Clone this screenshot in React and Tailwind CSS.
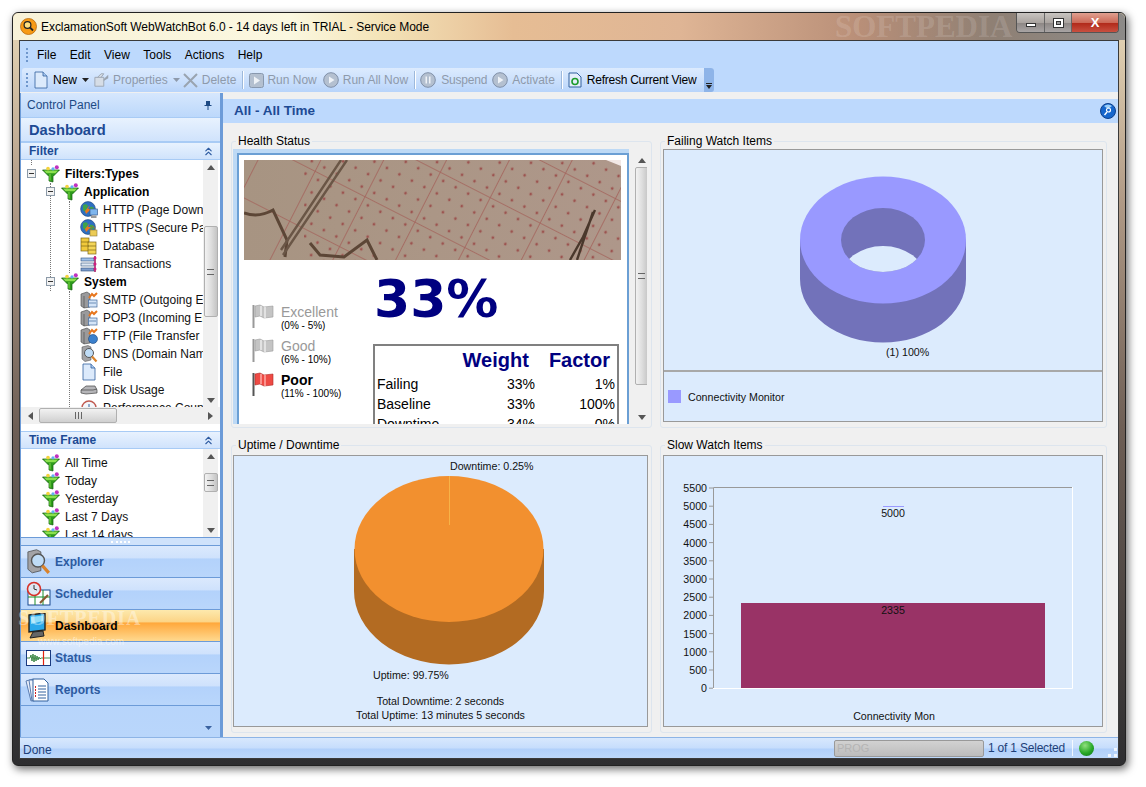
import { ChevronsUp } from "lucide-react"

const ui = "font-['Liberation_Sans',Arial,sans-serif]"

function Funnel() {
  return (
    <svg width="18" height="18" viewBox="0 0 18 18" className="shrink-0">
      <path d="M0.5 5 H17.5 L11 11.5 V17 L7 16 V11.5 Z" fill="#2d9a1a" stroke="#0f5c0c" strokeWidth="0.7" />
      <path d="M2 5.6 H16 L13.5 8.2 H4.5 Z" fill="#8be04e" />
      <path d="M8 9 V15.5" stroke="#6fd03e" strokeWidth="1.2" />
      <circle cx="6" cy="3.6" r="1.8" fill="#f4d33c" />
      <circle cx="11" cy="3.8" r="1.6" fill="#60b0f0" />
      <circle cx="14.8" cy="2.2" r="2" fill="#c030c0" />
    </svg>
  )
}

function Globe({ lock }) {
  return (
    <svg width="18" height="18" viewBox="0 0 18 18" className="shrink-0">
      <circle cx="8" cy="8" r="7.4" fill="#2d6fc2" stroke="#1b3f78" strokeWidth="0.6" />
      <path d="M3 4 Q7 2 8 5 Q6 8 8 10 Q5 12 3 9 Z M10 6 Q14 5 14 9 Q12 12 10 10 Z" fill="#3fa34a" />
      <path d="M5 10 L10 4 L8 8 L11 8 L6 13 Z" fill="#e8781e" />
      {lock ? (
        <g>
          <path d="M11 11 V9.5 A2 2 0 0 1 15 9.5 V11" fill="none" stroke="#8a7a40" strokeWidth="1" />
          <rect x="10" y="11" width="7" height="6" fill="#eccb55" stroke="#8a7a40" strokeWidth="0.6" />
        </g>
      ) : (
        <g>
          <rect x="10" y="8" width="7.5" height="6" fill="#7fb6ee" stroke="#3a5f95" strokeWidth="0.7" />
          <rect x="11" y="14.5" width="5.5" height="2.5" fill="#9a9a9a" />
        </g>
      )}
    </svg>
  )
}

function Database() {
  return (
    <svg width="18" height="18" viewBox="0 0 18 18" className="shrink-0">
      <rect x="1" y="1" width="8" height="13" fill="#f0c93c" stroke="#7c6414" strokeWidth="0.7" />
      <rect x="8" y="5" width="8" height="12" fill="#f4d658" stroke="#7c6414" strokeWidth="0.7" />
      <path d="M1 5 H9 M1 9 H9 M8 9 H16 M8 13 H16" stroke="#7c6414" strokeWidth="0.7" />
    </svg>
  )
}

function Transactions() {
  return (
    <svg width="18" height="18" viewBox="0 0 18 18" className="shrink-0">
      <rect x="1" y="3" width="13" height="3" fill="#9fc0ea" stroke="#31507e" strokeWidth="0.6" />
      <rect x="1" y="8" width="13" height="3" fill="#dfe8f3" stroke="#31507e" strokeWidth="0.6" />
      <rect x="1" y="13" width="13" height="3" fill="#7d9ccb" stroke="#31507e" strokeWidth="0.6" />
      <path d="M15 1 V17" stroke="#a01860" strokeWidth="1.5" />
      <circle cx="15" cy="3" r="1.5" fill="#d01c80" />
      <circle cx="15" cy="9" r="1.5" fill="#d01c80" />
      <circle cx="15" cy="14" r="1.5" fill="#d01c80" />
    </svg>
  )
}

function ServerMail({ ftp }) {
  return (
    <svg width="18" height="18" viewBox="0 0 18 18" className="shrink-0">
      <path d="M1 3 L7 1 L10 3 V16 L4 17 L1 15 Z" fill="#9a9a9c" stroke="#444" strokeWidth="0.6" />
      <path d="M4 5 V17" stroke="#444" strokeWidth="0.6" />
      <path d="M9 7 L12 3 L14 5 L17 2" fill="none" stroke="#e8761c" strokeWidth="2" />
      {ftp ? <circle cx="13" cy="12" r="4.5" fill="#3b80cc" stroke="#1c4478" strokeWidth="0.6" /> : <rect x="8.5" y="9" width="8.5" height="7" fill="#d5e5f8" stroke="#41679c" strokeWidth="0.7" />}
      {!ftp && <path d="M9 12 H16" stroke="#41679c" strokeWidth="0.7" />}
    </svg>
  )
}

function Magnifier({ size = 18 }) {
  return (
    <svg width={size} height={size} viewBox="0 0 18 18" className="shrink-0">
      <path d="M2 2 L8 0.5 L11 2 V15 L5 16.5 L2 14 Z" fill="#a3a3a6" stroke="#444" strokeWidth="0.5" />
      <circle cx="9" cy="8" r="4.5" fill="#bfdcf6" stroke="#555" strokeWidth="1" />
      <path d="M12 11.5 L16.5 16.5" stroke="#d9822b" strokeWidth="2.2" />
    </svg>
  )
}

function FileIcon() {
  return (
    <svg width="18" height="18" viewBox="0 0 18 18" className="shrink-0">
      <path d="M3 1 H11 L15 5 V17 H3 Z" fill="#dceafb" stroke="#31609e" strokeWidth="0.8" />
      <path d="M11 1 V5 H15" fill="#a8c8ee" stroke="#31609e" strokeWidth="0.8" />
    </svg>
  )
}

function DiskIcon() {
  return (
    <svg width="18" height="18" viewBox="0 0 18 18" className="shrink-0">
      <path d="M1 9 L6 5 H15 L17 9 V12 L6 13 L1 12 Z" fill="#b5b5b8" stroke="#444" strokeWidth="0.7" />
      <path d="M1 9 L13 9 L17 8" fill="none" stroke="#444" strokeWidth="0.7" />
    </svg>
  )
}

function ClockIcon() {
  return (
    <svg width="18" height="18" viewBox="0 0 18 18" className="shrink-0">
      <circle cx="9" cy="9" r="7" fill="#f4f6fb" stroke="#c05a50" strokeWidth="1.4" />
      <path d="M9 5 V9 L12 10" stroke="#31609e" fill="none" />
    </svg>
  )
}

function Expander({ className }) {
  return (
    <span className={`absolute top-[4px] flex h-[9px] w-[9px] items-center justify-center border border-[#8c9aa8] bg-[#f2f2f2] ${className}`}>
      <span className="h-px w-[5px] bg-[#333]" />
    </span>
  )
}

function TreeRow({ indent, icon, label, bold, children }) {
  const pad = indent === 0 ? "pl-[21px]" : indent === 1 ? "pl-[40px]" : "pl-[59px]"
  return (
    <div className={`relative flex h-[18px] items-center gap-[5px] whitespace-nowrap ${pad}`}>
      {children}
      {icon}
      <span className={bold ? "font-bold text-[12px] text-black" : "text-[12px] text-[#111]"}>{label}</span>
    </div>
  )
}

function Arrow({ up, dark }) {
  return (
    <svg width="8" height="5" viewBox="0 0 8 5">
      <path d={up ? "M0 5 L4 0 L8 5 Z" : "M0 0 L4 5 L8 0 Z"} fill={dark ? "#333" : "#555"} />
    </svg>
  )
}

function VScroll({ before, thumb, className = "" }) {
  return (
    <div className={`flex w-[15px] shrink-0 flex-col items-center bg-[#f0f0f0] ${className}`}>
      <div className="flex h-[14px] shrink-0 items-center justify-center"><Arrow up /></div>
      <div className={`shrink-0 ${before}`} />
      <div className={`flex w-[14px] shrink-0 items-center justify-center rounded-[2px] border border-[#b0b0b0] bg-gradient-to-r from-[#f2f2f2] via-[#dedede] to-[#c4c4c4] ${thumb}`}>
        <div className="h-[6px] w-[7px] border-y border-[#666] bg-[linear-gradient(#fff0_40%,#666_40%,#666_60%,#fff0_60%)]" />
      </div>
      <div className="flex-1" />
      <div className="flex h-[14px] shrink-0 items-center justify-center"><Arrow /></div>
    </div>
  )
}

function PanelHeader({ title, children, className = "" }) {
  return (
    <div className={`flex items-center justify-between border-y border-[#a8cbf5] bg-gradient-to-b from-[#e8f2fe] to-[#d0e3fc] font-bold text-[#1d4a94] ${className}`}>
      {title}
      {children}
    </div>
  )
}

function NavButton({ icon, label, active }) {
  const look = active
    ? "bg-[linear-gradient(#fde9ad_0%,#fcd486_38%,#ffa83c_42%,#ffd98f_100%)] text-black"
    : "bg-[linear-gradient(#dbe9fd_0%,#cfe2fc_38%,#b3d2fb_42%,#b9d6fb_100%)] text-[#2c5aa0]"
  return (
    <div className={`flex h-[32px] items-center border-b border-[#6c9bd8] text-[12px] font-bold ${look}`}>
      <div className="flex w-[34px] shrink-0 justify-center">{icon}</div>
      <span>{label}</span>
    </div>
  )
}

function ToolItem({ icon, label, disabled, arrow, className = "" }) {
  return (
    <div className={`flex items-center whitespace-nowrap ${disabled ? "text-[#8e9aab]" : "text-black"} ${className}`}>
      {icon}
      <span className="ml-[3px] text-[12px]">{label}</span>
      {arrow && <svg width="7" height="4" viewBox="0 0 7 4" className="ml-[5px]"><path d="M0 0 H7 L3.5 4 Z" fill={disabled ? "#8e9aab" : "#222"} /></svg>}
    </div>
  )
}

function CircleBtn({ glyph }) {
  return (
    <svg width="16" height="16" viewBox="0 0 16 16">
      <circle cx="8" cy="8" r="7.3" fill="#b4c0d0" stroke="#8090a8" />
      {glyph === "play" && <path d="M6 4.5 L11.5 8 L6 11.5 Z" fill="#eef2f7" />}
      {glyph === "pause" && <path d="M5.5 4.5 H7 V11.5 H5.5 Z M9 4.5 H10.5 V11.5 H9 Z" fill="#eef2f7" />}
    </svg>
  )
}

function ToolSep() {
  return <div className="h-[18px] w-px bg-[#9db9dc] shadow-[1px_0_0_#fff]" />
}

function Group({ title, className = "", children }) {
  return (
    <div className={`relative rounded-[3px] border border-[#dde5ee] ${className}`}>
      <span className={`absolute left-[4px] top-[-8px] bg-[#f0f0f0] px-[2px] text-[12px] leading-[14px] text-black ${ui}`}>{title}</span>
      {children}
    </div>
  )
}

function Flag({ red }) {
  return (
    <svg width="22" height="25" viewBox="0 0 22 25" className="shrink-0">
      <path d="M1.5 1 V24" stroke={red ? "#555" : "#999"} strokeWidth="2" />
      <path d="M3 2 L8 1 L12 3 L21 2 V13 L12 14 L8 12 L3 13 Z" fill={red ? "#ee4a44" : "#c4c4c4"} stroke={red ? "#b02a26" : "#9a9a9a"} strokeWidth="0.6" />
      <path d="M9 2 V12 M13 3 V14" stroke={red ? "#ffb0aa" : "#efefef"} strokeWidth="1.4" />
    </svg>
  )
}

function Legend({ label, range, active }) {
  return (
    <div className="flex h-[34px] items-start gap-[7px]">
      <Flag red={active} />
      <div>
        <div className={`text-[14px] leading-[16px] ${active ? "font-bold text-black" : "text-[#999]"}`}>{label}</div>
        <div className="text-[10px] leading-[12px] text-black">{range}</div>
      </div>
    </div>
  )
}

function EcgPhoto() {
  return (
    <svg viewBox="0 0 377 100" className="h-[100px] w-[377px] shrink-0">
      <defs>
        <linearGradient id="paper" x1="0" x2="1" y1="0" y2="0">
          <stop offset="0" stopColor="#a79482" />
          <stop offset="0.5" stopColor="#ab9686" />
          <stop offset="1" stopColor="#ae978a" />
        </linearGradient>
        <pattern id="dots" width="14" height="14" patternUnits="userSpaceOnUse" patternTransform="translate(246 37) rotate(27)">
          <circle cx="7" cy="7" r="1.4" fill="#9c5450" />
        </pattern>
        <pattern id="grid" width="56" height="56" patternUnits="userSpaceOnUse" patternTransform="translate(246 37) rotate(27)">
          <path d="M0 0 H56 M0 0 V56" stroke="#a4645c" strokeWidth="1.6" fill="none" />
        </pattern>
      </defs>
      <rect width="377" height="100" fill="url(#paper)" />
      <rect x="60" width="317" height="100" fill="url(#dots)" />
      <rect width="377" height="100" fill="url(#grid)" />
      <path d="M0 53 Q15 58 29 50 L43 80 L41 97" fill="none" stroke="#5c4636" strokeWidth="3" />
      <path d="M103 0 L39 95 M97 0 L37 90" fill="none" stroke="#6a5646" strokeWidth="2.4" />
      <path d="M66 83 L76 95 L100 97 L123 80 L133 100" fill="none" stroke="#5c4636" strokeWidth="3" />
      <path d="M351 50 L339 77 L326 100 M349 52 L333 100" fill="none" stroke="#4a382c" strokeWidth="2.4" />
      <path d="M362 0 L377 0 L377 6 Z" fill="#f2e8e6" />
    </svg>
  )
}

function TableRow({ name, weight, factor }) {
  return (
    <div className="flex h-[20px] items-center text-[14px] text-black">
      <span className="w-[108px]">{name}</span>
      <span className="w-[50px] text-right">{weight}</span>
      <span className="w-[80px] text-right">{factor}</span>
    </div>
  )
}

function DonutChart() {
  return (
    <svg viewBox="0 0 439 220" className="h-[220px] w-[439px]">
      <defs>
        <clipPath id="hole"><ellipse cx="219" cy="90" rx="42" ry="32" /></clipPath>
      </defs>
      <path d="M136 90 V129 A83 63.5 0 0 0 302 129 V90 Z" fill="#7272ba" />
      <ellipse cx="219" cy="90" rx="83" ry="63.5" fill="#9999ff" />
      <ellipse cx="219" cy="90" rx="42" ry="32" fill="#7272ba" />
      <ellipse cx="219" cy="128" rx="42" ry="32" fill="#dcebfd" clipPath="url(#hole)" />
      <text x="222" y="206" fontSize="10.67" fill="#111" fontFamily="Liberation Sans">(1) 100%</text>
    </svg>
  )
}

function PieChart() {
  return (
    <svg viewBox="0 0 413 270" className="h-[270px] w-[413px]">
      <text x="216" y="14" fontSize="10.67" fill="#111" fontFamily="Liberation Sans">Downtime: 0.25%</text>
      <path d="M120 93 V135 A94.5 73 0 0 0 310 135 V93 Z" fill="#b36b22" />
      <ellipse cx="215" cy="93" rx="94.5" ry="73" fill="#f2902f" />
      <path d="M215.5 20 V69" stroke="#f7b347" strokeWidth="1" />
      <text x="139" y="223" fontSize="10.67" fill="#111" fontFamily="Liberation Sans">Uptime: 99.75%</text>
      <text x="206.5" y="249" fontSize="10.67" fill="#111" textAnchor="middle" fontFamily="Liberation Sans">Total Downtime: 2 seconds</text>
      <text x="206.5" y="263" fontSize="10.67" fill="#111" textAnchor="middle" fontFamily="Liberation Sans">Total Uptime: 13 minutes 5 seconds</text>
    </svg>
  )
}

function BarChart() {
  const ticks = [5500, 5000, 4500, 4000, 3500, 3000, 2500, 2000, 1500, 1000, 500, 0]
  return (
    <svg viewBox="0 0 439 270" className="h-[270px] w-[439px]">
      <path d="M49 232.5 H408.5 V31" stroke="#fff" strokeWidth="1" fill="none" />
      <path d="M49.5 232 V31.5 H408" stroke="#999" strokeWidth="1" fill="none" />
      <rect x="77" y="147" width="304" height="85" fill="#993366" />
      <path d="M219 50.5 H240" stroke="#9999ff" strokeWidth="1" />
      {ticks.map((t, i) => (
        <g key={t}>
          <path d={`M45 ${32 + i * 18.2} H49`} stroke="#999" />
          <text x="43" y={36 + i * 18.2} fontSize="10.67" textAnchor="end" fill="#111" fontFamily="Liberation Sans">{t}</text>
        </g>
      ))}
      <text x="229" y="61" fontSize="10.67" textAnchor="middle" fill="#111" fontFamily="Liberation Sans">5000</text>
      <text x="229" y="158" fontSize="10.67" textAnchor="middle" fill="#111" fontFamily="Liberation Sans">2335</text>
      <text x="230" y="264" fontSize="10.67" textAnchor="middle" fill="#111" fontFamily="Liberation Sans">Connectivity Mon</text>
    </svg>
  )
}

const menus = ["File", "Edit", "View", "Tools", "Actions", "Help"]

const timeframes = ["All Time", "Today", "Yesterday", "Last 7 Days", "Last 14 days"]

export default function App() {
  return (
    <div className={`h-[787px] w-[1146px] overflow-hidden bg-white pl-[12px] pt-[12px] ${ui}`}>
      <div className="relative flex h-[754px] w-[1114px] flex-col rounded-[6px] border border-[#222] bg-[linear-gradient(#e8d8b8_0%,#b09a86_25%,#6e5f56_55%,#2e2e30_100%)] px-[6px] pb-[6px] shadow-[2px_3px_9px_rgba(0,0,0,0.6)]">
        {/* title bar */}
        <div className="relative -mx-[6px] flex h-[27px] shrink-0 items-center rounded-t-[6px] bg-[linear-gradient(90deg,#f8f2d8_0%,#fbf8e0_25%,#f4e4b8_33%,#e6bd94_45%,#dfb595_60%,#b98f78_76%,#8f8074_88%,#8c8a88_100%)] pl-[7px]">
          <svg width="17" height="17" viewBox="0 0 17 17" className="shrink-0">
            <circle cx="8.5" cy="8.5" r="8" fill="#f79a15" stroke="#b86a10" strokeWidth="0.8" />
            <circle cx="7.5" cy="7" r="3.4" fill="#ffe080" stroke="#222" strokeWidth="1.2" />
            <path d="M10 9.5 L13 12.5" stroke="#222" strokeWidth="1.8" />
          </svg>
          <span className="ml-[4px] whitespace-nowrap text-[12px] tracking-[-0.05px] text-black">ExclamationSoft WebWatchBot 6.0 - 14 days left in TRIAL - Service Mode</span>
          <span className="absolute left-[822px] top-[-4px] font-['Liberation_Serif',serif] text-[31px] font-bold leading-[36px] text-white/15">SOFTPEDIA</span>
          <div className="absolute right-[6px] top-0 flex h-[20px] overflow-hidden rounded-b-[4px] border border-t-0 border-[#555]">
            <div className="flex w-[28px] items-center justify-center border-r border-[#666] bg-[linear-gradient(#c8c4c0_0%,#aaa4a0_50%,#8c8684_52%,#a8a4a4_100%)]">
              <div className="mt-[5px] h-[4px] w-[10px] border border-[#333] bg-white" />
            </div>
            <div className="flex w-[27px] items-center justify-center border-r border-[#666] bg-[linear-gradient(#c8c4c0_0%,#aaa4a0_50%,#8c8684_52%,#a8a4a4_100%)]">
              <div className="flex h-[10px] w-[11px] items-center justify-center border border-[#333] bg-white">
                <div className="h-[4px] w-[5px] border border-[#333] bg-[#9a9a9a]" />
              </div>
            </div>
            <div className="flex w-[46px] items-center justify-center bg-[linear-gradient(#e0a090_0%,#cc6a58_50%,#b02818_52%,#c85040_100%)] text-[13px] font-bold leading-none text-white">X</div>
          </div>
        </div>

        {/* client area */}
        <div className="flex min-h-0 flex-1 flex-col border border-[#3a3a3a] bg-[#f0f0f0]">
          <div className="flex h-[27px] shrink-0 items-center bg-[#bdd9fd] pl-[6px]">
            <div className="h-[14px] w-[2px] border-l-2 border-dotted border-[#6f97cc]" />
            <div className="ml-[9px] flex gap-[13.5px] text-[12px] text-black">
              {menus.map((m) => <span key={m}>{m}</span>)}
            </div>
          </div>

          <div className="flex h-[24px] shrink-0 bg-[#bdd9fd]">
            <div className="ml-[2px] flex w-[692px] items-center rounded-[3px] bg-[linear-gradient(#dcebfe,#c8defc_60%,#b8d4fa)] pl-[4px]">
              <div className="h-[14px] w-[2px] border-l-2 border-dotted border-[#6f97cc]" />
              <ToolItem className="ml-[4px]" arrow label="New" icon={<FileIcon />} />
              <ToolItem className="ml-[5px]" disabled arrow label="Properties" icon={
                <svg width="16" height="16" viewBox="0 0 18 16"><path d="M1 5 H11 V15 H1 Z M4 5 L8 1 H11 L8 5" fill="#d6dde6" stroke="#9aa4b0" /><path d="M11 7 L16 2 V6 L11 9 Z" fill="#9aa4b0" /></svg>
              } />
              <ToolItem className="ml-[2px]" disabled label="Delete" icon={
                <svg width="17" height="17" viewBox="0 0 17 17"><path d="M2 2 L15 15 M15 2 L2 15" stroke="#9aa4b0" strokeWidth="2" /></svg>
              } />
              <div className="ml-[6px]"><ToolSep /></div>
              <ToolItem className="ml-[6px]" disabled label="Run Now" icon={
                <svg width="15" height="15" viewBox="0 0 15 15"><rect x="0.5" y="0.5" width="14" height="14" rx="2" fill="#b4c0d0" stroke="#8898ae" /><path d="M5 3.5 L11 7.5 L5 11.5 Z" fill="#eef2f7" /></svg>
              } />
              <ToolItem className="ml-[6px]" disabled label={<span className="ml-px">Run All Now</span>} icon={<CircleBtn glyph="play" />} />
              <div className="ml-[6px]"><ToolSep /></div>
              <ToolItem className="ml-[5px]" disabled label={<span className="ml-[2px] tracking-[-0.2px]">Suspend</span>} icon={<CircleBtn glyph="pause" />} />
              <ToolItem className="ml-[5px]" disabled label={<span className="ml-px">Activate</span>} icon={<CircleBtn glyph="play" />} />
              <div className="ml-[6px]"><ToolSep /></div>
              <ToolItem className="ml-[6px]" label={<span className="ml-[2px] tracking-[-0.25px]">Refresh Current View</span>} icon={
                <svg width="14" height="16" viewBox="0 0 14 16"><path d="M1 1 H9 L13 5 V15 H1 Z" fill="#e4eefb" stroke="#31609e" /><circle cx="7" cy="9.5" r="3" fill="none" stroke="#1c9a2a" strokeWidth="1.6" /></svg>
              } />
              <div className="ml-auto flex h-full w-[10px] flex-col items-center justify-end rounded-r-[3px] bg-[#8eb4e8] pb-[3px]">
                <div className="h-px w-[6px] bg-[#222]" />
                <svg width="6" height="4" viewBox="0 0 6 4" className="mt-px"><path d="M0 0 H6 L3 4 Z" fill="#222" /></svg>
              </div>
            </div>
          </div>

          <div className="flex min-h-0 flex-1 pt-px">
            {/* left panel */}
            <div className="flex w-[200px] shrink-0 flex-col border-l border-[#6c9bd8] bg-white">
              <div className="flex h-[24px] shrink-0 items-center justify-between bg-[linear-gradient(#d6e7fd,#bcd8fb)] pl-[6px] pr-[8px] text-[12px] text-[#1d4a84]">
                Control Panel
                <svg width="8" height="10" viewBox="0 0 8 10"><path d="M2 1 H6 V5 H7.5 V6 H4.5 V10 H3.5 V6 H0.5 V5 H2 Z" fill="#1d4a84" /></svg>
              </div>
              <PanelHeader title="Dashboard" className="h-[25px] shrink-0 pl-[8px] pt-px text-[14.7px]" />
              <PanelHeader title="Filter" className="h-[18px] shrink-0 pl-[8px] text-[12px]">
                <ChevronsUp size={13} className="mr-[5px] text-[#2c5aa0]" />
              </PanelHeader>

              <div className="flex h-[247px] shrink-0 overflow-hidden pr-[2px]">
                <div className="relative min-w-0 flex-1 overflow-hidden pt-[5px]">
                  <div className="absolute left-[10px] top-0 h-[5px] border-l border-dotted border-[#777]" />
                  <div className="absolute left-[29px] top-[23px] h-[108px] border-l border-dotted border-[#777]" />
                  <div className="absolute left-[48px] top-[41px] h-[72px] border-l border-dotted border-[#777]" />
                  <div className="absolute left-[48px] top-[131px] h-[120px] border-l border-dotted border-[#777]" />
                  <TreeRow indent={0} bold label="Filters:Types" icon={<Funnel />}><Expander className="left-[6px]" /></TreeRow>
                  <TreeRow indent={1} bold label="Application" icon={<Funnel />}><Expander className="left-[25px]" /></TreeRow>
                  <TreeRow indent={2} label="HTTP (Page Downl" icon={<Globe />} />
                  <TreeRow indent={2} label="HTTPS (Secure Pag" icon={<Globe lock />} />
                  <TreeRow indent={2} label="Database" icon={<Database />} />
                  <TreeRow indent={2} label="Transactions" icon={<Transactions />} />
                  <TreeRow indent={1} bold label="System" icon={<Funnel />}><Expander className="left-[25px]" /></TreeRow>
                  <TreeRow indent={2} label="SMTP (Outgoing E" icon={<ServerMail />} />
                  <TreeRow indent={2} label="POP3 (Incoming Er" icon={<ServerMail />} />
                  <TreeRow indent={2} label="FTP (File Transfer P" icon={<ServerMail ftp />} />
                  <TreeRow indent={2} label="DNS (Domain Nam" icon={<Magnifier />} />
                  <TreeRow indent={2} label="File" icon={<FileIcon />} />
                  <TreeRow indent={2} label="Disk Usage" icon={<DiskIcon />} />
                  <TreeRow indent={2} label="Performance Coun" icon={<ClockIcon />} />
                </div>
                <VScroll before="h-[52px]" thumb="h-[91px]" />
              </div>
              <div className="flex h-[17px] shrink-0 items-center bg-[#f0f0f0] pr-[2px]">
                <div className="flex w-[18px] justify-center"><svg width="5" height="8" viewBox="0 0 5 8"><path d="M5 0 L0 4 L5 8 Z" fill="#555" /></svg></div>
                <div className="flex h-[15px] w-[78px] items-center justify-center rounded-[2px] border border-[#b0b0b0] bg-gradient-to-b from-[#f2f2f2] to-[#d0d0d0]">
                  <div className="h-[7px] w-[7px] border-x border-[#666] bg-[linear-gradient(90deg,#fff0_40%,#666_40%,#666_60%,#fff0_60%)]" />
                </div>
                <div className="flex-1" />
                <div className="flex w-[15px] justify-center"><svg width="5" height="8" viewBox="0 0 5 8"><path d="M0 0 L5 4 L0 8 Z" fill="#555" /></svg></div>
              </div>
              <div className="h-[7px] shrink-0 bg-white" />

              <PanelHeader title="Time Frame" className="h-[18px] shrink-0 pl-[8px] text-[12px]">
                <ChevronsUp size={13} className="mr-[5px] text-[#2c5aa0]" />
              </PanelHeader>
              <div className="flex h-[88px] shrink-0 overflow-hidden pr-[2px]">
                <div className="min-w-0 flex-1 overflow-hidden pt-[5px]">
                  {timeframes.map((t) => (
                    <div key={t} className="flex h-[18px] items-center gap-[5px] whitespace-nowrap pl-[21px] text-[12px] text-[#111]">
                      <Funnel />
                      {t}
                    </div>
                  ))}
                </div>
                <VScroll before="h-[10px]" thumb="h-[19px]" />
              </div>
              <div className="flex h-[9px] shrink-0 items-center justify-center border-y border-[#6c9bd8] bg-[#cfe2fb]">
                <div className="h-[2px] w-[19px] border-t-2 border-dotted border-white" />
              </div>

              <div className="relative flex min-h-0 flex-1 flex-col bg-[linear-gradient(#dbe9fd_0%,#cfe2fc_38%,#b3d2fb_42%,#b9d6fb_100%)]">
                <NavButton label="Explorer" icon={<Magnifier size={26} />} />
                <NavButton label="Scheduler" icon={
                  <svg width="26" height="26" viewBox="0 0 26 26">
                    <rect x="3" y="9" width="22" height="15" fill="#fff" stroke="#1a4a90" />
                    <path d="M3 16 H25 M10 9 V24 M18 9 V24" stroke="#1b8f2a" />
                    <circle cx="9" cy="8" r="6.5" fill="#dfe8f3" stroke="#d63028" strokeWidth="1.6" />
                    <path d="M9 4 V8 L12 9" stroke="#333" fill="none" />
                    <path d="M15 22 L23 14" stroke="#8a5a30" strokeWidth="2.2" />
                  </svg>
                } />
                <NavButton active label="Dashboard" icon={
                  <svg width="26" height="26" viewBox="0 0 26 26">
                    <path d="M4 2 L20 0 V17 L4 19 Z" fill="#2aa8ea" stroke="#222" strokeWidth="1.4" />
                    <path d="M6 4 L18 2.5 V8 L6 11 Z" fill="#8fdcf8" />
                    <path d="M8 19 L18 18 L19 23 L5 25 Z" fill="#666" stroke="#222" />
                  </svg>
                } />
                <NavButton label="Status" icon={
                  <svg width="25" height="16" viewBox="0 0 25 16">
                    <rect x="0.5" y="0.5" width="24" height="15" fill="#fff" stroke="#1a3a80" />
                    <path d="M1 8 H4 L5 5 L6 11 L7 4 L8 12 L9 5 L10 11 L11 6 L12 10 L13 7 L14 9 L15 8 H24" stroke="#156e20" fill="none" strokeWidth="0.8" />
                    <path d="M17.5 1 V15" stroke="#e02010" strokeWidth="1.2" />
                  </svg>
                } />
                <NavButton label="Reports" icon={
                  <svg width="26" height="26" viewBox="0 0 26 26">
                    <path d="M1 4 L8 2 L14 22 L6 24 Z" fill="#e8eefa" stroke="#5a7cb0" />
                    <path d="M4 3 H12 L14 23 L7 24 Z" fill="#eef3fb" stroke="#5a7cb0" />
                    <path d="M8 2 H19 L23 6 V24 H8 Z" fill="#fff" stroke="#31609e" />
                    <path d="M13 9 H21 M13 12 H21 M13 15 H21 M13 18 H21 M13 21 H21" stroke="#31609e" />
                    <path d="M10.5 9 V21" stroke="#d02020" strokeDasharray="2 1" />
                  </svg>
                } />
                <div className="flex flex-1 items-center justify-end pr-[8px] pt-[12px]">
                  <svg width="7" height="4" viewBox="0 0 7 4"><path d="M0 0 H7 L3.5 4 Z" fill="#3a62a0" /></svg>
                </div>
                <span className="pointer-events-none absolute left-[-3px] top-[60px] font-['Liberation_Serif',serif] text-[20px] font-bold leading-[24px] tracking-[1px] text-white/40">SOFTPEDIA</span>
                <span className="pointer-events-none absolute left-[17px] top-[90px] text-[10px] leading-[12px] text-white/45">www.softpedia.com</span>
              </div>
            </div>

            <div className="w-[3px] shrink-0 bg-[#6c9bd8]" />

            {/* right panel */}
            <div className="flex min-w-0 flex-1 flex-col bg-[#f0f0f0]">
              <div className="mt-[6px] flex h-[24px] shrink-0 items-center justify-between bg-[#bdd9fd] pl-[11px] pr-[2px] text-[13.5px] font-bold text-[#1d4a94]">
                <span>All - All Time</span>
                <svg width="16" height="16" viewBox="0 0 16 16">
                  <circle cx="8" cy="8" r="7.5" fill="#1666cc" stroke="#0d3f8c" />
                  <path d="M4 3 A6 6 0 0 1 12 3 L8 6 Z" fill="#9cd0fa" />
                  <circle cx="8.5" cy="7" r="2" fill="none" stroke="#fff" strokeWidth="1.2" />
                  <path d="M7 9 L4.5 12" stroke="#fff" strokeWidth="1.4" />
                </svg>
              </div>

              <div className="grid grid-cols-[421px_447px] grid-rows-[287px_288px] gap-x-[8px] gap-y-[17px] pl-[8px] pt-[18px]">
                <Group title="Health Status" className="flex pb-[3px] pl-[1px] pr-[4px] pt-[7px]">
                  <div className="flex min-w-0 flex-1 overflow-hidden">
                    <div className="flex w-[396px] shrink-0 flex-col overflow-hidden border-l-[4px] border-t-[4px] border-[#bdd9f5]">
                      <div className="flex min-h-0 flex-1 flex-col overflow-hidden border-x-2 border-t-2 border-[#6b9fd4] bg-white pl-[5px] pt-[5px]">
                        <EcgPhoto />
                        <div className="flex">
                          <div className="w-[129px] shrink-0 pl-[8px] pt-[44px]">
                            <Legend label="Excellent" range="(0% - 5%)" />
                            <Legend label="Good" range="(6% - 10%)" />
                            <Legend active label="Poor" range="(11% - 100%)" />
                          </div>
                          <div className="w-[246px] shrink-0">
                            <div className="flex h-[84px] items-center pb-[6px] pl-[1px] font-['DejaVu_Sans',sans-serif] text-[52px] font-bold leading-none text-[#000080]">33%</div>
                            <div className="border-2 border-[#808080] px-[2px]">
                              <div className="flex h-[28px] items-center justify-end text-[20px] font-bold text-[#000080]">
                                <span>Weight</span>
                                <span className="ml-[20px] mr-[5px]">Factor</span>
                              </div>
                              <TableRow name="Failing" weight="33%" factor="1%" />
                              <TableRow name="Baseline" weight="33%" factor="100%" />
                              <TableRow name="Downtime" weight="34%" factor="0%" />
                              <TableRow name="Slow" weight="0%" factor="0%" />
                            </div>
                          </div>
                        </div>
                      </div>
                    </div>
                    <div className="ml-[5px]"><VScroll before="h-[0px]" thumb="h-[218px]" className="h-full pt-[4px]" /></div>
                  </div>
                </Group>

                <Group title="Failing Watch Items" className="pb-[5px] pl-[2px] pr-[3px] pt-[7px]">
                  <div className="flex h-full flex-col border border-[#999] bg-[#dcebfd]">
                    <div className="h-[220px] shrink-0"><DonutChart /></div>
                    <div className="flex flex-1 items-center border-t-2 border-[#a8a8a8] pl-[4px]">
                      <div className="h-[13px] w-[13px] bg-[#9999ff]" />
                      <span className="ml-[7px] text-[10.67px] text-[#111]">Connectivity Monitor</span>
                    </div>
                  </div>
                </Group>

                <Group title="Uptime / Downtime" className="pb-[5px] pl-[1px] pr-[3px] pt-[9px]">
                  <div className="h-full overflow-hidden border border-[#999] bg-[#dcebfd]"><PieChart /></div>
                </Group>

                <Group title="Slow Watch Items" className="pb-[5px] pl-[2px] pr-[3px] pt-[9px]">
                  <div className="h-full overflow-hidden border border-[#999] bg-[#dcebfd]"><BarChart /></div>
                </Group>
              </div>
            </div>
          </div>

          {/* status bar */}
          <div className="flex h-[21px] shrink-0 items-center border-t border-[#8db4e6] bg-[linear-gradient(#d8e8fd,#c6ddfc_50%,#b1d0fa_55%,#bcd8fb)] pl-[3px] text-[12px] text-[#1d3f78]">
            <span className="pt-[3px]">Done</span>
            <div className="ml-auto flex h-[17px] w-[150px] items-center rounded-[2px] border border-[#999] bg-[linear-gradient(#d2d2d2,#bcbcbc)] pl-[2px] text-[11px] text-[#b4b4b4]">PROG</div>
            <span className="ml-[4px] whitespace-nowrap tracking-[-0.2px]">1 of 1 Selected</span>
            <div className="ml-[7px] h-[16px] w-px bg-white/80" />
            <div className="ml-[6px] h-[15px] w-[15px] rounded-full bg-[radial-gradient(circle_at_40%_30%,#90e080,#28a828_55%,#0c7018)]" />
            <div className="ml-[14px] mr-px mt-[8px] h-[9px] w-[9px] border-b-[3px] border-r-[3px] border-dotted border-white/80" />
          </div>
        </div>
      </div>
    </div>
  )
}
